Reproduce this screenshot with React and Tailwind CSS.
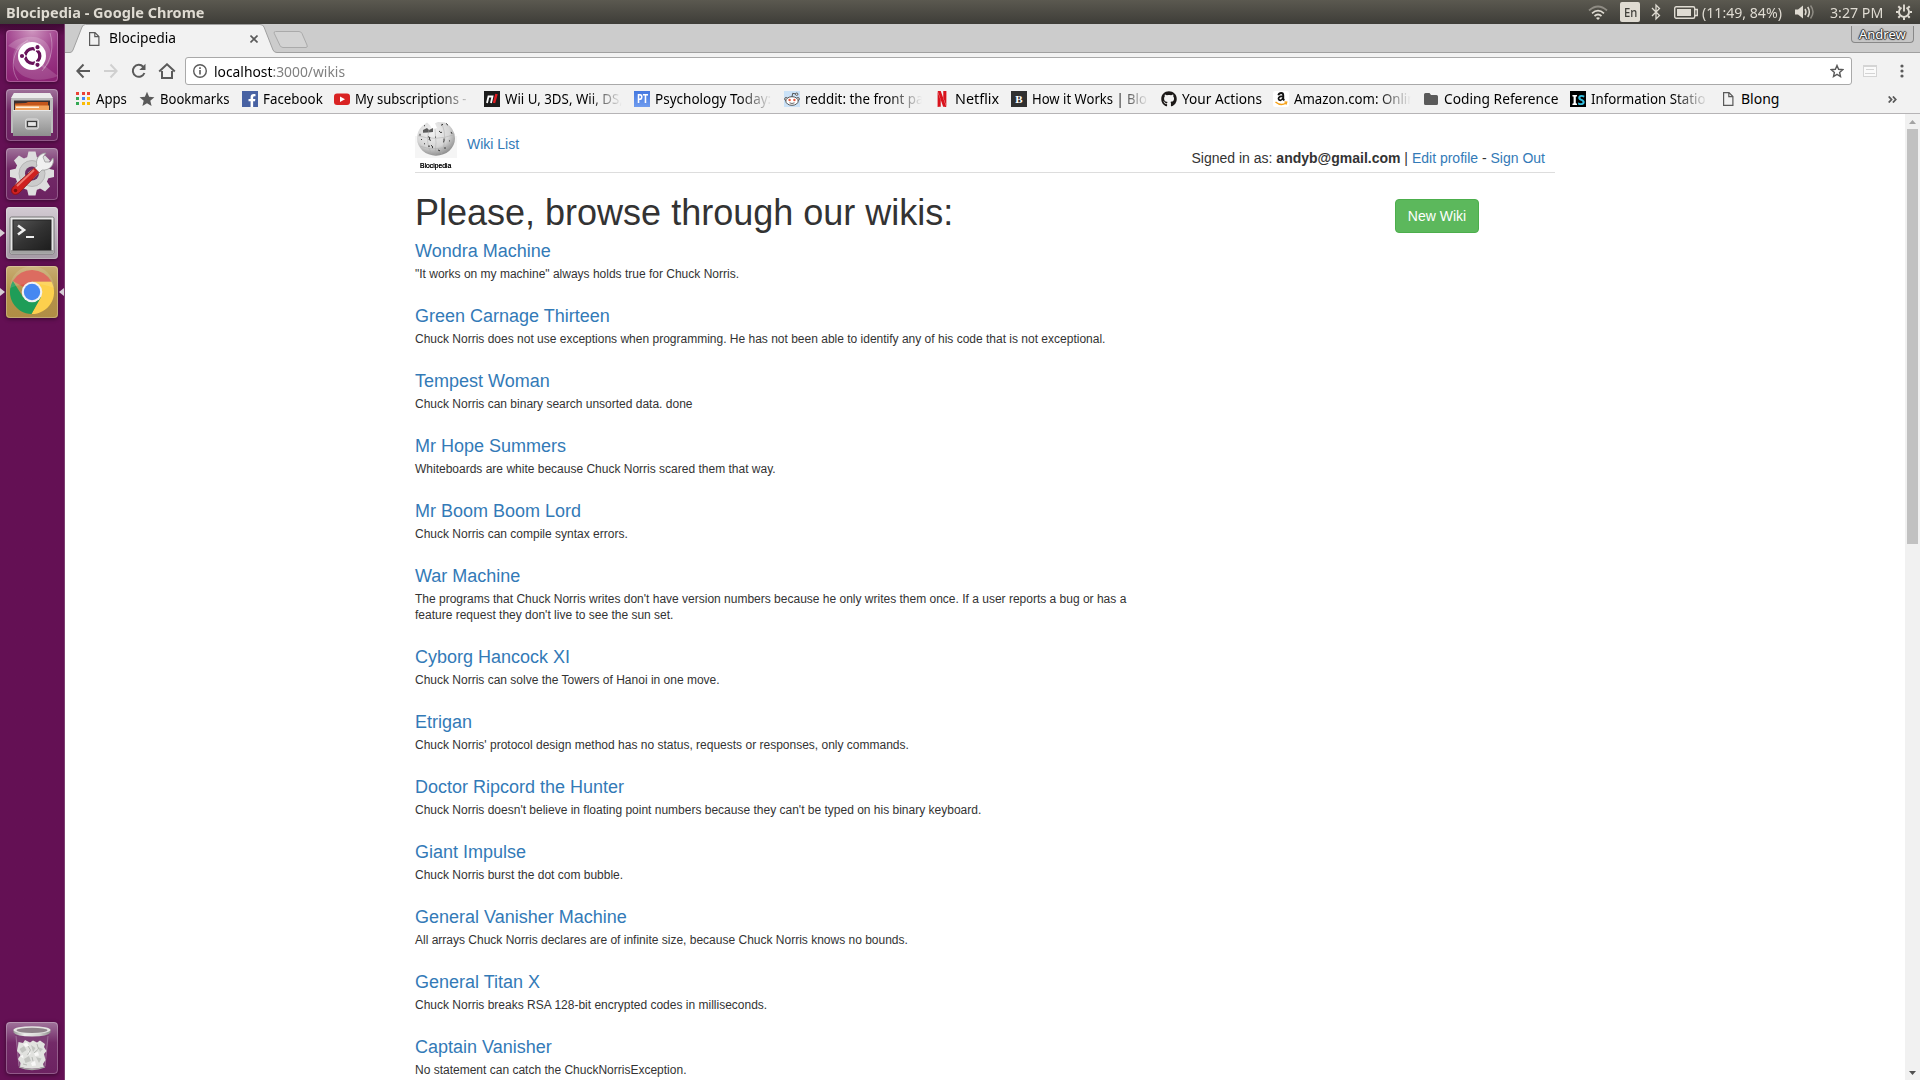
import React, { useLayoutEffect, useRef, useState } from "react";
import { SiNetflix } from "react-icons/si";
import { FaFacebookF, FaGithub } from "react-icons/fa";

// Draws a label condensed or widened to an exact pixel width.
function Fit({ w, className = "", children }) {
  const ref = useRef(null);
  const [k, setK] = useState(1);
  useLayoutEffect(() => {
    setK(w / ref.current.offsetWidth);
  }, [w]);
  return (
    <span className="flex shrink-0 whitespace-nowrap" style={{ width: w }}>
      <span
        ref={ref}
        className={"block shrink-0 origin-left whitespace-nowrap " + className}
        style={{ transform: `scaleX(${k})` }}
      >
        {children}
      </span>
    </span>
  );
}

const ui = "font-['Noto_Sans','Open_Sans',sans-serif]";

/* ---------- system bar ---------- */

function SystemBar() {
  return (
    <header className="flex h-6 shrink-0 items-center bg-linear-to-b from-[#5b5950] to-[#3e3d38] pl-[6px] text-[#dfdbd2]">
      <Fit w={199} className="text-[14px] leading-[23px] font-bold">Blocipedia - Google Chrome</Fit>
      <div className="ml-auto flex h-6 items-center">
        <svg className="mt-[1px] w-5 h-4" viewBox="0 0 20 16" fill="none" strokeWidth="1.7">
          <path d="M1 5.500 Q10 -2.500 19 5.500" stroke="#8f8c84" />
          <path d="M4 8.300 Q10 3 16 8.300" stroke="#dfdbd2" />
          <path d="M6.500 11 Q10 8 13.500 11" stroke="#dfdbd2" />
          <path d="M8 13 L10 15 L12 13 Q10 11.500 8 13Z" fill="#dfdbd2" stroke="none" />
        </svg>
        <div className="ml-3 flex h-5 w-5 items-center justify-center rounded-[2px] bg-[#dfdbd2] text-[#3f3e39]">
          <Fit w={13} className="text-[13px] leading-5 font-medium">En</Fit>
        </div>
        <svg className="ml-[11px] h-[18px] w-[10px]" viewBox="0 0 10 18" fill="none" stroke="#dfdbd2" strokeWidth="1.3">
          <path d="M1 5 L8.500 12.500 L5 16 V2 L8.500 5.500 L1 13" />
        </svg>
        <svg className="ml-[13px] h-[13px] w-6" viewBox="0 0 24 13" fill="none" stroke="#dfdbd2" strokeWidth="1.4">
          <rect x="0.700" y="0.700" width="20" height="11.600" rx="1.500" />
          <rect x="3" y="3" width="14" height="7" fill="#dfdbd2" stroke="none" />
          <path d="M21 3.500 H23.300 V9.500 H21" />
        </svg>
        <div className="ml-[4px]"><Fit w={80} className="text-[15px] leading-[23px]">(11:49, 84%)</Fit></div>
        <svg className="ml-[13px] h-4 w-5" viewBox="0 0 20 16" fill="none" strokeWidth="1.5">
          <path d="M0 5.500 H3 L8 1.500 V14.500 L3 10.500 H0Z" fill="#dfdbd2" />
          <path d="M10 5 Q12 8 10 11" stroke="#dfdbd2" />
          <path d="M12.700 3 Q16 8 12.700 13" stroke="#dfdbd2" />
          <path d="M15.500 1.500 Q20.500 8 15.500 14.500" stroke="#8f8c84" />
        </svg>
        <div className="ml-[15px]"><Fit w={53} className="text-[15px] leading-[23px]">3:27 PM</Fit></div>
        <svg className="ml-[13px] mr-[8px] h-4 w-4" viewBox="0 0 16 16" fill="none" stroke="#dfdbd2">
          <path d="M5.500 3.600 A5 5 0 1 0 10.500 3.600" strokeWidth="1.900" />
          <path d="M8 0.500 V7.500" strokeWidth="1.900" />
          <path d="M2.300 2.300 L4 4 M13.700 2.300 L12 4 M0 8 H2.500 M13.500 8 H16 M2.300 13.700 L4 12 M13.700 13.700 L12 12 M8 13.500 V16" strokeWidth="2" />
        </svg>
      </div>
    </header>
  );
}

/* ---------- launcher ---------- */

function Tile({ bg, left, right, children }) {
  return (
    <div className="relative h-[52px] w-[65px] shrink-0 pl-[6px]">
      <div className={"h-[52px] w-[52px] overflow-hidden rounded-[4px] shadow-[0_1px_4px_rgba(0,0,0,0.45)] " + bg}>
        {children}
      </div>
      {left && <div className="absolute left-0 top-[22px] h-0 w-0 border-y-4 border-l-[5px] border-y-transparent border-l-[#d6cdd4]" />}
      {right && <div className="absolute right-[1px] top-[22px] h-0 w-0 border-y-4 border-r-[5px] border-y-transparent border-r-[#d6cdd4]" />}
    </div>
  );
}

const frame = (
  <rect x="0.500" y="0.500" width="51" height="51" rx="3.500" fill="none" stroke="#fff" strokeOpacity="0.25" />
);

function DashIcon() {
  return (
    <svg viewBox="0 0 52 52" className="h-full w-full">
      <defs>
        <radialGradient id="dash" cx="0.5" cy="0" r="1">
          <stop offset="0" stopColor="#cf97c0" />
          <stop offset="0.55" stopColor="#9c3a88" />
          <stop offset="1" stopColor="#8c2374" />
        </radialGradient>
      </defs>
      <rect width="52" height="52" fill="url(#dash)" />
      <path d="M2 16 C12 5 36 2 43 17 C48 28 42 36 38 39 L26 26Z" fill="#fff" opacity="0.18" />
      <path d="M52 46 C30 55 8 47 7 30 C6 18 15 11 24 11 L26 26Z" fill="#fff" opacity="0.15" />
      <path d="M12 50 C3 38 7 18 22 10 M44 3 C48 16 46 30 36 41" stroke="#fff" strokeOpacity="0.3" fill="none" />
      <circle cx="26" cy="26" r="14" fill="#fff" />
      <circle cx="26.500" cy="26" r="7.300" fill="none" stroke="#69135b" strokeWidth="3.300" />
      <g stroke="#fff" strokeWidth="1.200" fill="#69135b">
        <path d="M26.500 26 L17 26 M26.500 26 L31 18 M26.500 26 L31 34" />
        <circle cx="26.500" cy="26" r="5.300" fill="#fff" stroke="none" />
        <circle cx="16" cy="26" r="2.700" />
        <circle cx="31.500" cy="17.200" r="2.700" />
        <circle cx="31.500" cy="34.800" r="2.700" />
      </g>
      {frame}
    </svg>
  );
}

function FilesIcon() {
  return (
    <svg viewBox="0 0 52 52" className="h-full w-full">
      <defs>
        <linearGradient id="cab" x1="0" y1="0" x2="0" y2="1">
          <stop offset="0" stopColor="#c8c8c8" /><stop offset="1" stopColor="#8e8e8e" />
        </linearGradient>
        <linearGradient id="fbg" x1="0" y1="0" x2="0" y2="1">
          <stop offset="0" stopColor="#a0749b" /><stop offset="0.4" stopColor="#732a68" /><stop offset="1" stopColor="#6c2261" />
        </linearGradient>
      </defs>
      <rect width="52" height="52" fill="url(#fbg)" />
      <path d="M8 4 H44 L47 10 V44 H45 V46 H7 V44 H5 V10Z" fill="#bdbdbd" />
      <path d="M8 4 H44 L47 9 H5Z" fill="#ececec" />
      <rect x="8" y="11.500" width="36" height="10" fill="#3a3030" />
      <path d="M9 14.500 L20 14 L22 13 H42 V22 H9Z" fill="#c4561b" />
      <path d="M9 16.500 H43 V22 H9Z" fill="#f2a35c" />
      <path d="M10 17.500 H33 V19 H10Z" fill="#fff0dc" />
      <path d="M7 21 H45 V47 H7Z" fill="url(#cab)" />
      <path d="M7 21.500 H45" stroke="#e8e8e8" />
      <rect x="19.500" y="30" width="13" height="10" rx="2" fill="#bdbdbd" stroke="#dcdcdc" />
      <rect x="21.500" y="32.500" width="9" height="5" fill="#e6e6e6" stroke="#3d3d3d" strokeWidth="1.200" />
      {frame}
    </svg>
  );
}

function SettingsIcon() {
  return (
    <svg viewBox="0 0 52 52" className="h-full w-full">
      <rect width="52" height="52" fill="url(#fbg)" />
      <g fill="#dedede">
        {[0, 45, 90, 135, 180, 225, 270, 315].map((a) => (
          <path key={a} d="M20.500 12 L22.500 3.500 H29.500 L31.500 12Z" transform={`rotate(${a} 26 25.500)`} />
        ))}
      </g>
      <circle cx="26" cy="25.500" r="17" fill="#dedede" />
      <circle cx="26" cy="25.500" r="13" fill="#cbcbcb" stroke="#b5b5b5" />
      <circle cx="26" cy="25.500" r="7" fill="#6c2a62" />
      <path d="M22 25 L31 18 C29 12 33 5 40 5 L37 9 L39 14 L44 14 L47 10 C49 17 43 23 36 22 L27 31Z" fill="#f0f0f0" stroke="#9a9a9a" strokeWidth="0.800" />
      <path d="M28.500 20 L33 24.500 L13 45 C8 49 3 44 7 39Z" fill="#cf2020" stroke="#8c1111" strokeWidth="0.800" />
      <path d="M28 22 L11 38" stroke="#ef7a70" strokeWidth="1.800" />
      <circle cx="9.500" cy="42.500" r="1.800" fill="#7a0e0e" />
      {frame}
    </svg>
  );
}

function TerminalIcon() {
  return (
    <svg viewBox="0 0 52 52" className="h-full w-full">
      <defs>
        <linearGradient id="tbg" x1="0" y1="0" x2="0" y2="1">
          <stop offset="0" stopColor="#d3cbd3" /><stop offset="1" stopColor="#a59aa5" />
        </linearGradient>
        <linearGradient id="scr" x1="0" y1="0" x2="1" y2="1">
          <stop offset="0" stopColor="#555" /><stop offset="0.5" stopColor="#333" /><stop offset="1" stopColor="#1d1d1d" />
        </linearGradient>
      </defs>
      <rect width="52" height="52" fill="url(#tbg)" />
      <rect x="4" y="10" width="44" height="37" rx="1.500" fill="#e7e7e7" stroke="#777" />
      <path d="M4.500 43 H47.500 V46.500 H4.500Z" fill="#a2a2a2" />
      <rect x="7" y="13" width="38" height="30" fill="url(#scr)" stroke="#222" />
      <path d="M12 18.500 L18 23 L12 27.500" stroke="#eee" strokeWidth="2.600" fill="none" />
      <path d="M20 30 H28" stroke="#eee" strokeWidth="2" />
      {frame}
    </svg>
  );
}

function ChromeIcon() {
  return (
    <svg viewBox="0 0 52 52" className="h-full w-full">
      <defs>
        <linearGradient id="cbg" x1="0" y1="0" x2="0" y2="1">
          <stop offset="0" stopColor="#c8ad72" /><stop offset="0.5" stopColor="#b4924a" /><stop offset="1" stopColor="#b08e45" />
        </linearGradient>
      </defs>
      <rect width="52" height="52" fill="url(#cbg)" />
      <path d="M26 26 L6.900 15 A22 22 0 0 1 45.500 15.700 H26Z" fill="#d8584b" />
      <path d="M26 15.700 H45.500 A22 22 0 0 1 25.500 48 L35 31Z" fill="#fdd04d" />
      <path d="M6.900 15 L17 31 L35 31 L25.500 48 A22 22 0 0 1 6.900 15Z" fill="#1f9d58" />
      <circle cx="26" cy="26" r="10.300" fill="#f2f2f2" />
      <circle cx="26" cy="26" r="8.200" fill="#4688f1" />
      <path d="M4 22 Q26 13 48 22 A22 22 0 0 0 4 22Z" fill="#fff" opacity="0.12" />
      {frame}
    </svg>
  );
}

function TrashIcon() {
  return (
    <svg viewBox="0 0 52 52" className="h-full w-full">
      <defs>
        <linearGradient id="rim" x1="0" y1="0" x2="1" y2="0">
          <stop offset="0" stopColor="#9b9c99" /><stop offset="0.3" stopColor="#eeeeec" /><stop offset="0.7" stopColor="#d3d4d1" /><stop offset="1" stopColor="#8f908d" />
        </linearGradient>
      </defs>
      <rect width="52" height="52" fill="url(#fbg)" />
      <path d="M9 11 L12.500 45 Q26 50 39.500 45 L43 11Z" fill="#7d3f75" />
      <path d="M10 14 L13 44 M42 14 L39 44" stroke="#b08cab" strokeOpacity="0.6" />
      <path d="M12 24 L12.500 20 L17 21 L19 18 L24 20.500 L27 18.500 L31 20.500 L34 18.500 L39 22 L38 25 L40.500 29 L38 32 L39.500 38 L37 42 L38 45 Q26 48.500 14 45 L14.500 41 L12 37 L14.500 33 L11 29Z" fill="#e1e2df" />
      <g fill="#c2c4c0">
        <path d="M13.500 27 L18 24 L20.500 28 L16 31Z M25 23 L29.500 26 L27 30Z M18 37 L23 34 L25 39 L19.500 41Z M30 35 L35.500 36.500 L33 41Z M32 25 L37 27 L34 30Z" />
      </g>
      <g fill="#f8f8f7">
        <path d="M17 22 L21 20.500 L23 24 L19.500 25Z M28 31 L32 30 L33 33.500 L29 34Z M22 29 L25 31 L22.500 33.500Z M25 41 L29 39 L30 43.500 L26 44Z M14 34 L17 33 L17.500 36.500Z" />
      </g>
      <path d="M22 24 L24.500 28 L21.500 33 M31 22 L32.500 27 L28 31 M26 35 L27 39 M17 42 L21 43" stroke="#a4a6a1" strokeWidth="0.700" fill="none" />
      <path d="M13 45 Q26 50 39 45" stroke="#a7a9a5" strokeWidth="1.300" fill="none" />
      <path d="M7.500 7.500 V10.500 Q10 14.500 26 14.500 Q42 14.500 44.500 10.500 V7.500Z" fill="url(#rim)" />
      <ellipse cx="26" cy="8" rx="18.500" ry="3.800" fill="#e4e4e2" />
      <ellipse cx="26" cy="8.300" rx="15.500" ry="2.600" fill="#8e8289" />
      {frame}
    </svg>
  );
}

function Launcher() {
  return (
    <aside className="flex w-[65px] shrink-0 flex-col gap-[7px] border-r border-[#7c3f70] bg-[#641054] bg-linear-to-b from-[#3f0934] to-[#641054] to-[12px] pt-[6px] pb-[6px]">
      <Tile bg="bg-[#8c2374]"><DashIcon /></Tile>
      <Tile bg="bg-[#6c2261]"><FilesIcon /></Tile>
      <Tile bg="bg-[#6c2261]"><SettingsIcon /></Tile>
      <Tile bg="bg-[#b8aeb8]" left><TerminalIcon /></Tile>
      <Tile bg="bg-[#b4924a]" left right><ChromeIcon /></Tile>
      <div className="mt-auto"><Tile bg="bg-[#6c2261]"><TrashIcon /></Tile></div>
    </aside>
  );
}

/* ---------- browser chrome ---------- */

function PageIcon({ className }) {
  return (
    <svg className={className} viewBox="0 0 16 16" fill="none" stroke="#5a5a5a" strokeWidth="1.200">
      <path d="M3.600 1.600 H9 L12.900 5.500 V14.400 H3.600Z M8.800 1.800 V5.700 H12.700" />
    </svg>
  );
}

function TabStrip() {
  return (
    <div className="relative flex h-[29px] shrink-0 border-b border-[#a0a0a0] bg-[#ccc]">
      <div className="relative ml-[5px] h-[29px] w-[207px]">
        <svg className="absolute left-0 top-0 h-[29px] w-[207px]" viewBox="0 0 207 29">
          <path d="M0 28.500 Q2 28.500 3 26 L12 3 Q13 0.500 15.500 0.500 H190 Q193 0.500 194 3 L203 26 Q204 28.500 207 28.500 V29 H0Z" fill="#f2f2f2" />
          <path d="M0 28.500 Q2 28.500 3 26 L12 3 Q13 0.500 15.500 0.500 H190 Q193 0.500 194 3 L203 26 Q204 28.500 207 28.500" fill="none" stroke="#a0a0a0" />
        </svg>
        <div className="relative flex h-[28px] items-center pl-[16px]">
          <PageIcon className="mt-[2px] h-4 w-4" />
          <div className="ml-[7px]"><Fit w={67} className="text-[14px] leading-[26px] text-black">Blocipedia</Fit></div>
          <svg className="ml-[74px] mt-[2px] h-2 w-2" viewBox="0 0 8 8" stroke="#5a5a5a" strokeWidth="1.600"><path d="M0.500 0.500 L7.500 7.500 M7.500 0.500 L0.500 7.500" /></svg>
        </div>
      </div>
      <svg className="-ml-[4px] mt-[7px] h-[17px] w-[36px]" viewBox="0 0 36 17">
        <path d="M2.500 0.500 H26 Q28 0.500 29 2.500 L34 14 Q35 16.500 33 16.500 H10 Q8 16.500 7 14.500 L1.300 2.500 Q0.500 0.500 2.500 0.500Z" fill="#d3d3d3" stroke="#aaa" />
      </svg>
      <div className="ml-auto mr-[6px] mt-[2px] flex h-[17px] w-[63px] items-center justify-center rounded-b-[4px] border border-t-0 border-[#888] bg-[#c6c6c6]">
        <Fit w={47} className="text-[13px] leading-4 text-white [text-shadow:0_0_1px_#333,1px_0_1px_#333,-1px_0_1px_#333,0_1px_1px_#333,0_-1px_1px_#333]">Andrew</Fit>
      </div>
    </div>
  );
}

function Toolbar() {
  return (
    <div className="flex h-[36px] shrink-0 items-center bg-[#f2f2f2] pl-[11px]">
      <svg className="h-4 w-[14px]" viewBox="0 0 14 16" fill="none" stroke="#5a5a5a" strokeWidth="2"><path d="M14 8 H1.500 M7.500 1.500 L1.300 8 L7.500 14.500" /></svg>
      <svg className="ml-[14px] h-4 w-[14px]" viewBox="0 0 14 16" fill="none" stroke="#d0d0d0" strokeWidth="2"><path d="M0 8 H12.500 M6.500 1.500 L12.700 8 L6.500 14.500" /></svg>
      <svg className="ml-[13px] h-4 w-4" viewBox="0 0 16 16" fill="none" stroke="#5a5a5a" strokeWidth="2"><path d="M13.400 10 A6 6 0 1 1 12.200 3.700" /><path d="M14.500 0.800 V7 H8.300Z" fill="#5a5a5a" stroke="none" /></svg>
      <svg className="ml-[11px] h-4 w-[18px]" viewBox="0 0 18 16" fill="none" stroke="#5a5a5a" strokeWidth="2"><path d="M1.200 8.500 L9 1.300 L16.800 8.500 M4 8 V15 H14 V8" /></svg>
      <div className="ml-[9px] flex h-[28px] w-[1667px] items-center rounded-[3px] border border-[#a9a9a9] bg-white pl-[7px] pr-[7px]">
        <svg className="h-[14px] w-[14px]" viewBox="0 0 14 14" fill="none" stroke="#5a5a5a"><circle cx="7" cy="7" r="6.300" strokeWidth="1.400" /><path d="M7 6 V10.500 M7 3.300 V4.900" strokeWidth="1.600" /></svg>
        <div className="ml-[7px]"><Fit w={131} className="text-[15px] leading-[26px] text-[#808080]"><span className="text-black">localhost</span>:3000/wikis</Fit></div>
        <svg className="ml-auto h-[14px] w-[14px]" viewBox="0 0 14 14" fill="none" stroke="#5a5a5a" strokeWidth="1.400"><path d="M7 1.500 L8.600 5.300 L12.700 5.700 L9.600 8.400 L10.500 12.500 L7 10.300 L3.500 12.500 L4.400 8.400 L1.300 5.700 L5.400 5.300Z" /></svg>
      </div>
      <svg className="ml-[11px] h-3 w-[14px]" viewBox="0 0 14 12" fill="#fafafa" stroke="#d4d4d4"><rect x="0.500" y="0.500" width="13" height="11" /><path d="M0 1.500 H14 M3 4.500 H11 M2 8.500 H12" /></svg>
      <svg className="ml-[23px] h-[14px] w-[4px]" viewBox="0 0 4 14" fill="#5a5a5a"><circle cx="2" cy="2" r="1.600" /><circle cx="2" cy="7" r="1.600" /><circle cx="2" cy="12" r="1.600" /></svg>
    </div>
  );
}

const box = "flex h-4 w-4 shrink-0 items-center justify-center";

const AppsGlyph = () => (
  <div className="grid h-4 w-4 grid-cols-3 content-start gap-[2px] pl-px pt-px">
    {["bg-[#ea4335]", "bg-[#ea4335]", "bg-[#ea4335]", "bg-[#34a853]", "bg-[#4285f4]", "bg-[#fbbc05]", "bg-[#34a853]", "bg-[#fbbc05]", "bg-[#fbbc05]"].map((c, i) => (
      <i key={i} className={"block h-[3px] w-[3px] " + c} />
    ))}
  </div>
);

const bookmarks = [
  { w: "w-[64px]", t: "Apps", tw: 31, icon: <AppsGlyph /> },
  { w: "w-[103px]", t: "Bookmarks", tw: 69, icon: <svg viewBox="0 0 16 16" className="h-4 w-4" fill="#5a5a5a"><path d="M8 0.800 L10.100 5.800 L15.400 6.200 L11.300 9.700 L12.600 15 L8 12.200 L3.400 15 L4.700 9.700 L0.600 6.200 L5.900 5.800Z" /></svg> },
  { w: "w-[92px]", t: "Facebook", tw: 60, icon: <div className={box + " items-end! bg-[#4862a3] text-white"}><FaFacebookF className="ml-1 h-[13px] w-[10px]" /></div> },
  { w: "w-[150px]", t: "My subscriptions -", tw: 112, fade: true, icon: <svg viewBox="0 0 16 16" className="h-4 w-4"><rect y="2.500" width="16" height="11.500" rx="3" fill="#d92323" /><path d="M6 5.500 V11 L11 8.200Z" fill="#fff" /></svg> },
  { w: "w-[150px]", t: "Wii U, 3DS, Wii, DS,", tw: 118, fade: true, icon: <svg viewBox="0 0 16 16" className="h-4 w-4"><rect width="16" height="16" fill="#1c1c1c" /><path d="M3 12 L4.500 5.500 H8.500 L7 12 M4 5.500 H8" stroke="#fff" strokeWidth="1.800" fill="none" /><path d="M10 12 L12.500 3" stroke="#e11b22" strokeWidth="2.500" /></svg> },
  { w: "w-[150px]", t: "Psychology Today:", tw: 116, fade: true, icon: <div className={box + " bg-linear-to-b from-[#4478e0] to-[#6f9bee] text-white"}><Fit w={11} className="text-[12px] leading-4 font-bold">PT</Fit></div> },
  { w: "w-[150px]", t: "reddit: the front pa", tw: 119, fade: true, icon: <svg viewBox="0 0 16 16" className="h-4 w-4"><rect width="16" height="16" fill="#cbe2f7" /><g fill="#fff" stroke="#444" strokeWidth="0.900"><circle cx="2.200" cy="8" r="1.500" /><circle cx="13.800" cy="8" r="1.500" /><ellipse cx="8" cy="10" rx="6.200" ry="4.300" /><path d="M8 5.700 L8.700 2.300 L12 3" fill="none" /><circle cx="12.700" cy="3.200" r="1.200" /></g><circle cx="5.600" cy="9" r="1.200" fill="#e9593f" /><circle cx="10.400" cy="9" r="1.200" fill="#e9593f" /><path d="M5.500 11.800 Q8 13.200 10.500 11.800" stroke="#444" strokeWidth="0.800" fill="none" /></svg> },
  { w: "w-[77px]", t: "Netflix", tw: 44, icon: <div className={box + " text-[#d9121c]"}><SiNetflix className="h-4 w-4" /></div> },
  { w: "w-[150px]", t: "How it Works | Blo", tw: 115, fade: true, icon: <div className={box + " bg-[#303030] font-['Liberation_Serif',serif] text-[11px] font-bold text-white"}>B</div> },
  { w: "w-[112px]", t: "Your Actions", tw: 80, icon: <FaGithub className="h-4 w-4 text-[#1b1817]" /> },
  { w: "w-[150px]", t: "Amazon.com: Onlin", tw: 121, fade: true, icon: <svg viewBox="0 0 16 16" className="h-4 w-4"><rect width="16" height="16" rx="2" fill="#fff" /><path d="M5.300 4.200 Q6 2 8.200 2 Q10.300 2 10.300 4.500 V8 L11.200 9.500 M10.300 5.200 Q5.500 5 5.500 7.700 Q5.600 9.300 7.300 9.300 Q9.200 9.200 10 7" stroke="#111" strokeWidth="1.800" fill="none" /><path d="M2.500 11 Q8 15.500 13 12 M11.500 11 L13.600 11.200 L13 13.500" stroke="#f6a21a" strokeWidth="1.500" fill="none" /></svg> },
  { w: "w-[147px]", t: "Coding Reference", tw: 114, icon: <svg viewBox="0 0 16 16" className="h-4 w-4" fill="#5a5a5a"><path d="M1 3.500 Q1 2 2.500 2 H6.500 L8 4 H13.500 Q15 4 15 5.500 V12.500 Q15 14 13.500 14 H2.500 Q1 14 1 12.500Z" /></svg> },
  { w: "w-[150px]", t: "Information Statio", tw: 115, fade: true, icon: <div className={box + " bg-black"}><Fit w={13} className="text-[15px] leading-4 font-bold text-[#35bfe0]"><span className="text-white">I</span>S</Fit></div> },
  { w: "w-[60px]", t: "Blong", tw: 38, icon: <PageIcon className="h-4 w-4" /> },
];

function BookmarksBar() {
  return (
    <nav className="flex h-[25px] shrink-0 items-start border-b border-[#b6b4b6] bg-[#f2f2f2] pl-[10px] text-black">
      {bookmarks.map((b) => (
        <div key={b.t} className={"flex h-5 shrink-0 items-center gap-[5px] " + b.w}>
          <span className="block h-4 w-4 shrink-0">{b.icon}</span>
          <div className={"w-[117px] shrink-0 " + (b.fade ? "mask-[linear-gradient(to_right,#000_84px,transparent_117px)]" : "")}>
            <Fit w={b.tw} className="text-[14px] leading-5">{b.t}</Fit>
          </div>
        </div>
      ))}
      <svg className="ml-auto mr-[23px] mt-[7px] h-[7px] w-[9px]" viewBox="0 0 9 7" fill="none" stroke="#5a5a5a" strokeWidth="1.800"><path d="M0.700 0.500 L3.500 3.500 L0.700 6.500 M4.900 0.500 L7.700 3.500 L4.900 6.500" /></svg>
    </nav>
  );
}

/* ---------- page ---------- */

const wikis = [
  ["Wondra Machine", "\"It works on my machine\" always holds true for Chuck Norris."],
  ["Green Carnage Thirteen", "Chuck Norris does not use exceptions when programming. He has not been able to identify any of his code that is not exceptional."],
  ["Tempest Woman", "Chuck Norris can binary search unsorted data. done"],
  ["Mr Hope Summers", "Whiteboards are white because Chuck Norris scared them that way."],
  ["Mr Boom Boom Lord", "Chuck Norris can compile syntax errors."],
  ["War Machine", "The programs that Chuck Norris writes don't have version numbers because he only writes them once. If a user reports a bug or has a feature request they don't live to see the sun set."],
  ["Cyborg Hancock XI", "Chuck Norris can solve the Towers of Hanoi in one move."],
  ["Etrigan", "Chuck Norris' protocol design method has no status, requests or responses, only commands."],
  ["Doctor Ripcord the Hunter", "Chuck Norris doesn't believe in floating point numbers because they can't be typed on his binary keyboard."],
  ["Giant Impulse", "Chuck Norris burst the dot com bubble."],
  ["General Vanisher Machine", "All arrays Chuck Norris declares are of infinite size, because Chuck Norris knows no bounds."],
  ["General Titan X", "Chuck Norris breaks RSA 128-bit encrypted codes in milliseconds."],
  ["Captain Vanisher", "No statement can catch the ChuckNorrisException."],
];

function Globe() {
  return (
    <svg className="h-[52px] w-[42px]" viewBox="0 0 42 52">
      <defs>
        <radialGradient id="globe" cx="0.4" cy="0.3" r="0.75">
          <stop offset="0" stopColor="#f4f4f4" /><stop offset="0.6" stopColor="#d6d6d6" /><stop offset="1" stopColor="#858585" />
        </radialGradient>
      </defs>
      <rect y="15" width="42" height="22" fill="#f5f5f5" />
      <g transform="translate(0 -0.500) scale(1 0.950)">
        <path d="M7 6 L12 2 L15 5 L17 9 L22 8 L20 3 L23 1.500 L30 2 Q40 8 40 19 A19 18 0 0 1 2 19 Q2 11 7 6Z" fill="url(#globe)" />
        <path d="M8 10 L12 8 L14 10 L18 8 L18 12 L13 12.500 L8 13Z" fill="#5c5c5c" />
        <g stroke="#aaa" strokeWidth="0.500" fill="none">
          <path d="M3 16 Q20 22 39 15 M5 27 Q21 33 37 26 M14 10 Q10 24 17 36 M27 3 Q33 20 26 36 M20 9 Q22 24 20 37" />
        </g>
        <g stroke="#333" strokeWidth="1" fill="none">
          <path d="M31 3 L33 5 M24 11 L26 13 L27 12 M13 17 L15 18 L14 20 L16 21 M29 19 V22 L28 23 M16 26 L18 28 L17 29 M13 27 H15 M30 28 V30 M6 20 H7 M36 12 L37 14 M23 31 L25 32 M9 5 L10 6 M20 18 L21 17 M5 14 V16 M26 5 L28 4 M34 22 L35 21 M9 24 L10 25" />
        </g>
      </g>
    </svg>
  );
}

function WikiPage() {
  return (
    <main className="h-full min-w-0 flex-1 overflow-hidden bg-white font-['Liberation_Sans',Arial,sans-serif] text-[14px] text-[#333]">
      <div className="ml-[350px] w-[1140px]">
        <div className="flex h-[59px] border-b border-[#ddd]">
          <div className="relative pt-[7px]">
            <Globe />
            <div className="absolute left-[5px] top-[47px] text-black"><Fit w={31} className="text-[7px] leading-[10px] [text-shadow:0_0_0.5px_#000]">Blocipedia</Fit></div>
          </div>
          <a className="ml-[10px] mt-[20px] leading-5 text-[#337ab7]">Wiki List</a>
          <div className="ml-auto mr-[10px] mt-[34px] leading-5">
            Signed in as: <b>andyb@gmail.com</b> | <a className="text-[#337ab7]">Edit profile</a> - <a className="text-[#337ab7]">Sign Out</a>
          </div>
        </div>
        <div className="flex">
          <section className="w-[760px] pr-[30px]">
            <h1 className="mt-[20px] text-[36px] leading-[40px] font-medium">Please, browse through our wikis:</h1>
            <div className="mt-[8px]">
              {wikis.map(([title, body]) => (
                <article key={title} className="mb-[24px]">
                  <h4 className="text-[18px] leading-[20px] text-[#337ab7]">{title}</h4>
                  <p className="mt-[5px] text-[12px] leading-[16px]">{body}</p>
                </article>
              ))}
            </div>
          </section>
          <a className="ml-[220px] mt-[26px] flex h-[34px] w-[84px] items-center justify-center rounded-[4px] border border-[#4cae4c] bg-[#5cb85c] text-white">New Wiki</a>
        </div>
      </div>
    </main>
  );
}

function Scrollbar() {
  return (
    <div className="flex w-[15px] shrink-0 flex-col items-center bg-[#f1f1f1]">
      <svg className="h-[15px] w-[15px] shrink-0" viewBox="0 0 15 15" fill="#a3a3a3"><path d="M4 10 L7.500 6 L11 10Z" /></svg>
      <div className="h-[415px] w-[11px] bg-[#c1c1c1]" />
      <svg className="mt-auto h-[15px] w-[15px] shrink-0" viewBox="0 0 15 15" fill="#505050"><path d="M4 6 L7.500 10 L11 6Z" /></svg>
    </div>
  );
}

export default function App() {
  return (
    <div className={"flex h-[1080px] w-[1920px] flex-col overflow-hidden " + ui}>
      <SystemBar />
      <div className="flex min-h-0 flex-1">
        <Launcher />
        <div className="flex min-w-0 flex-1 flex-col">
          <TabStrip />
          <Toolbar />
          <BookmarksBar />
          <div className="flex min-h-0 flex-1">
            <WikiPage />
            <Scrollbar />
          </div>
        </div>
      </div>
    </div>
  );
}
